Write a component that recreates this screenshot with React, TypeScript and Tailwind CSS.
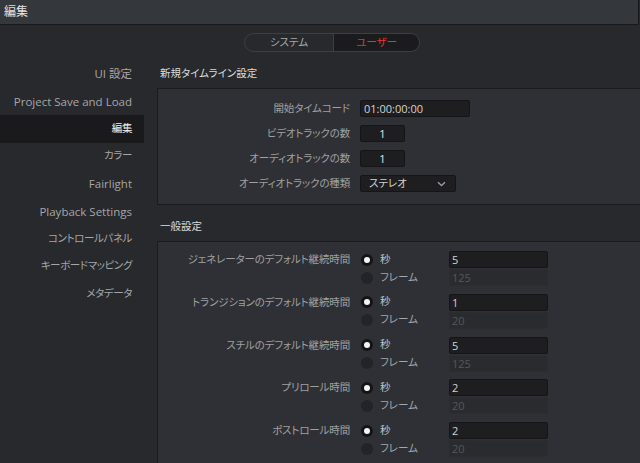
import React from 'react'

const sideItems = [
  { text: 'UI 設定', jp: false },
  { text: 'Project Save and Load', jp: false },
  { text: '編集', jp: true },
  { text: 'カラー', jp: true },
  { text: 'Fairlight', jp: false },
  { text: 'Playback Settings', jp: false },
  { text: 'コントロールパネル', jp: true },
  { text: 'キーボードマッピング', jp: true },
  { text: 'メタデータ', jp: true },
]

const durations = [
  { label: 'ジェネレーターのデフォルト継続時間', sec: '5', frames: '125' },
  { label: 'トランジションのデフォルト継続時間', sec: '1', frames: '20' },
  { label: 'スチルのデフォルト継続時間', sec: '5', frames: '125' },
  { label: 'プリロール時間', sec: '2', frames: '20' },
  { label: 'ポストロール時間', sec: '2', frames: '20' },
]

function Radio({ on }: { on?: boolean }) {
  if (on) {
    return (
      <span className="w-[12px] h-[12px] rounded-full bg-[#141416] flex items-center justify-center shrink-0">
        <span className="w-[6px] h-[6px] rounded-full bg-[#f4f4f4]" />
      </span>
    )
  }
  return <span className="w-[12px] h-[12px] rounded-full bg-[#232428] shrink-0" />
}

function Field({ value, className = '' }: { value: string; className?: string }) {
  return (
    <div
      className={`h-[17px] bg-[#1e1e20] border border-[#151517] rounded-[2px] text-[11px] leading-[15px] text-[#d2d2d2] ${className}`}
    >
      {value}
    </div>
  )
}

const label = 'w-[192px] text-right text-[#a0a0a0] text-[10.5px] tracking-[-0.15px]'

export default function App() {
  return (
    <div className="w-[640px] h-[463px] overflow-hidden bg-[#28292d] font-['Open_Sans','Noto_Sans_CJK_JP',sans-serif] [font-feature-settings:'palt'] text-[11px] select-none">
      {/* title */}
      <div className="h-[25px] w-[639px] bg-[#34373c] border-b border-r border-[#18191c] flex items-center pl-[4px] text-[12px] text-[#e2e2e2]">
        編集
      </div>

      {/* tabs */}
      <div className="flex pt-[8px] pl-[244px]">
        <div className="flex h-[19px] w-[176px] rounded-full border border-[#3d3f45] overflow-hidden text-[10.5px]">
          <div className="w-[89px] flex items-center justify-center text-[#a9a9a9] border-r border-[#3d3f45]">
            システム
          </div>
          <div className="flex-1 flex items-center justify-center bg-[#1b1b1d] text-[#e8332c]">
            ユーザー
          </div>
        </div>
      </div>

      <div className="flex pt-[8px]">
        {/* sidebar */}
        <nav className="w-[144px] shrink-0">
          {sideItems.map((item) => (
            <div
              key={item.text}
              className={`h-[27.5px] flex items-center justify-end pr-[12px] ${
                item.jp ? 'text-[10.5px] tracking-[-0.4px]' : 'text-[11.5px]'
              } ${item.text === '編集' ? 'bg-[#1a1a1c] text-[#f2f2f2]' : 'text-[#a6a6a6]'}`}
            >
              {item.text}
            </div>
          ))}
        </nav>

        {/* content */}
        <main className="flex-1 pl-[13px]">
          <div className="h-[28px] flex items-center pl-[3px] text-[10.5px] text-[#dcdcdc]">新規タイムライン設定</div>
          <section className="bg-[#2e3035] border-t border-l border-b border-[#1a1b1e] pt-[11px] pb-[12px] flex flex-col gap-[8px]">
            <div className="flex items-center">
              <div className={label}>開始タイムコード</div>
              <Field value="01:00:00:00" className="ml-[10px] w-[110px] pl-[3px]" />
            </div>
            <div className="flex items-center">
              <div className={label}>ビデオトラックの数</div>
              <Field value="1" className="ml-[10px] w-[45px] text-center text-[#dfe6f2]" />
            </div>
            <div className="flex items-center">
              <div className={label}>オーディオトラックの数</div>
              <Field value="1" className="ml-[10px] w-[45px] text-center text-[#dfe6f2]" />
            </div>
            <div className="flex items-center">
              <div className={label}>オーディオトラックの種類</div>
              <div className="ml-[10px] w-[96px] h-[17px] bg-[#1e1e20] border border-[#151517] rounded-[2px] flex items-center justify-between pl-[8px] pr-[9px] text-[10.5px] text-[#d2d2d2]">
                <span>ステレオ</span>
                <svg width="9" height="6" viewBox="0 0 9 6" fill="none">
                  <path d="M1 1.2 L4.5 4.6 L8 1.2" stroke="#9a9a9a" strokeWidth="1.4" />
                </svg>
              </div>
            </div>
          </section>

          <div className="mt-[8px] h-[28px] flex items-center pl-[3px] text-[10.5px] text-[#dcdcdc]">一般設定</div>
          <section className="bg-[#2e3035] border-t border-l border-[#1a1b1e] pt-[9px] pb-[20px] flex flex-col gap-[7.75px]">
            {durations.map((d) => (
              <div key={d.label} className="flex">
                <div className={`${label} h-[17px] leading-[17px]`}>{d.label}</div>
                <div className="ml-[11px] flex flex-col gap-[1px]">
                  <div className="flex items-center h-[17px]">
                    <Radio on />
                    <span className="ml-[7px] w-[69px] text-[10.5px] text-[#c4c4c4]">秒</span>
                    <Field value={d.sec} className="w-[99px] pl-[2px]" />
                  </div>
                  <div className="flex items-center h-[17px]">
                    <Radio />
                    <span className="ml-[7px] w-[69px] text-[10.5px] text-[#a6a6a6]">フレーム</span>
                    <div className="w-[99px] h-[17px] bg-[#2a2b2f] border border-[#2c2d31] rounded-[2px] pl-[2px] leading-[15px] text-[#54565b]">
                      {d.frames}
                    </div>
                  </div>
                </div>
              </div>
            ))}
          </section>
        </main>
      </div>
    </div>
  )
}
